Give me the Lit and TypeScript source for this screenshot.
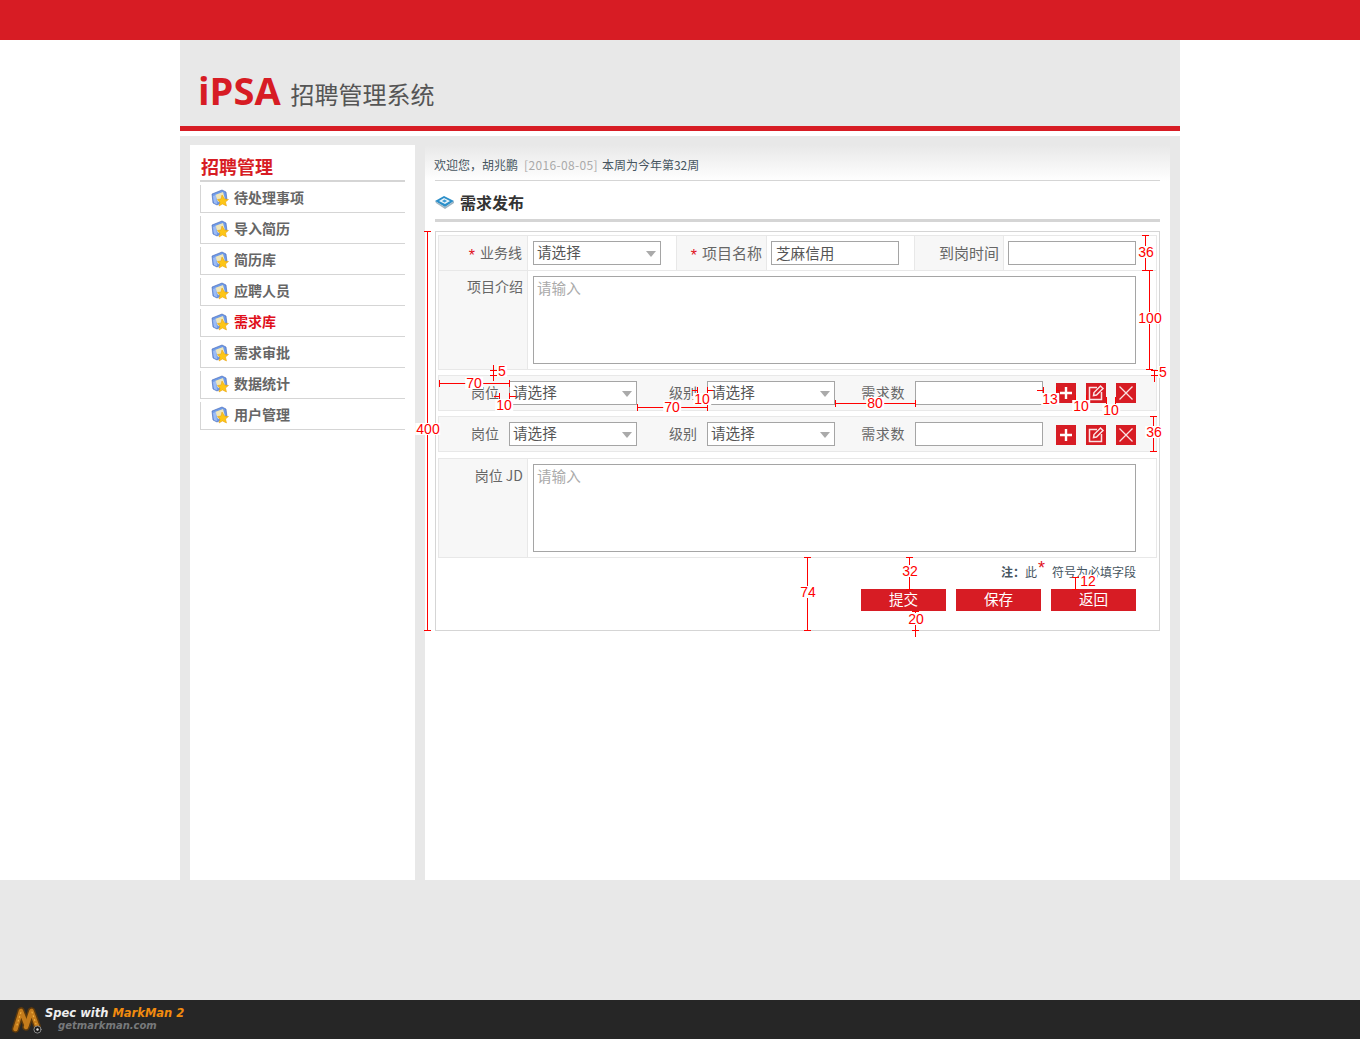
import { LitElement, html, css, svg } from 'lit';
import { customElement } from 'lit/decorators.js';

const MENU = ['待处理事项', '导入简历', '简历库', '应聘人员', '需求库', '需求审批', '数据统计', '用户管理'];
const ACTIVE_MENU = '需求库';

// markman spec lines: [x1, y1, x2, y2]
const SPEC_LINES: number[][] = [
  [427, 231, 427, 631],
  [1145, 235, 1145, 270],
  [1149, 270, 1149, 369],
  [439, 383, 509, 383],
  [637, 407, 707, 407],
  [835, 403, 915, 403],
  [1153, 416, 1153, 452],
  [807, 557, 807, 631],
  [909, 557, 909, 589],
  [915, 611, 915, 637],
  [1075, 577, 1075, 589],
  [493, 365, 493, 381],
  [1154, 370, 1154, 382],
  [494, 396, 499, 396],
  [509, 396, 516, 396],
  [692, 390, 697, 390],
  [707, 390, 713, 390],
  [1037, 390, 1043, 390],
  [1056, 390, 1060, 390],
];

// caps are short ticks across a line end: [x, y, vertical]
const SPEC_CAPS: number[][] = [
  [427, 231, 0], [427, 630, 0], [1145, 235, 0], [1145, 270, 0], [1149, 270, 0], [1149, 369, 0],
  [1153, 416, 0], [1153, 451, 0], [807, 557, 0], [807, 630, 0], [909, 557, 0], [915, 630, 0],
  [493, 370, 0], [493, 375, 0], [1154, 370, 0], [1154, 375, 0], [915, 611, 0], [1075, 589, 0],
  [1075, 577, 0], [909, 589, 0],
  [439, 383, 1], [509, 383, 1], [637, 407, 1], [707, 407, 1], [835, 403, 1], [915, 403, 1],
  [499, 396, 1], [509, 396, 1], [697, 390, 1], [707, 390, 1], [1043, 390, 1], [1056, 390, 1],
  [1075, 398, 1], [1086, 398, 1], [1106, 400, 1], [1115, 400, 1],
];

const SPEC_LABELS: [string, number, number][] = [
  ['400', 428, 429], ['36', 1146, 252], ['100', 1150, 318], ['5', 1163, 372], ['5', 502, 371],
  ['70', 474, 383], ['10', 504, 405], ['70', 672, 407], ['10', 702, 399], ['80', 875, 403],
  ['13', 1050, 399], ['10', 1081, 406], ['10', 1111, 410], ['36', 1154, 432], ['74', 808, 592],
  ['32', 910, 571], ['20', 916, 619], ['12', 1088, 581],
];

const folderIcon = svg`<svg width="18" height="18" viewBox="0 0 18 18">
  <path d="M1 5 L11 1 L15 3 L16 11 L6 16 L2 14 Z" fill="#6f9be8" stroke="#3f63b4" stroke-width=".6"/>
  <path d="M4 6 L12 3 L14 10 L7 13 Z" fill="#efe6b8"/>
  <path d="M2 7 L5 6 L6 15 L3 14 Z" fill="#9dbcf5"/>
  <path d="M11 6 L13.5 10 L17.5 10.5 L14.5 13 L15.5 17 L11.5 15 L8 17 L9 13 L6.5 10.5 L10 10 Z" fill="#fdc617" stroke="#e59a06" stroke-width=".5"/>
</svg>`;

const titleIcon = svg`<svg width="20" height="15" viewBox="0 0 20 15">
  <path d="M0 6 L9 1 L19 6 L10 12 Z" fill="#2c8fc9"/>
  <path d="M4 6 L9 3 L15 6 L10 9 Z" fill="#e8f3fa"/>
  <path d="M7 6 L9.5 4.5 L12 6 L9.5 7.5 Z" fill="#3b9bd3"/>
  <path d="M0 6 L10 12 L19 6 L19 8 L10 14 L1 8 Z" fill="#9fb4c2"/>
</svg>`;

const plusIcon = svg`<svg width="20" height="20" viewBox="0 0 20 20"><path d="M10 4 V16 M4 10 H16" stroke="#fff" stroke-width="2.4" fill="none"/></svg>`;
const editIcon = svg`<svg width="20" height="20" viewBox="0 0 20 20" fill="none" stroke="#fff" stroke-width="1.5" opacity=".88">
  <path d="M11 4.5 H3.5 V16.5 H15.5 V9"/>
  <path d="M7.5 12.5 L8 9.5 L14.5 3 L17 5.5 L10.5 12 Z"/>
</svg>`;
const closeIcon = svg`<svg width="20" height="20" viewBox="0 0 20 20"><path d="M3.5 3.5 L16.5 16.5 M16.5 3.5 L3.5 16.5" stroke="#fff" stroke-width="1.3" fill="none" opacity=".88"/></svg>`;

const markmanLogo = svg`<svg width="32" height="28" viewBox="0 0 32 28" fill="none" stroke-linecap="round">
  <path d="M4.5 23 L10 5 M10 5 L15.5 19" stroke="#5e3a0c" stroke-width="7.5"/>
  <path d="M15 21 L20.5 5 M20.5 5 L26 20" stroke="#5e3a0c" stroke-width="7.5"/>
  <path d="M4.5 23 L10 5 L15.5 19" stroke="#c57c1c" stroke-width="4.5" stroke-linejoin="round"/>
  <path d="M15 21 L20.5 5 L26 20" stroke="#c57c1c" stroke-width="4.5" stroke-linejoin="round"/>
  <path d="M6 19 L10 6 M21 6 L25 18" stroke="#f0b040" stroke-width="1.2" stroke-dasharray="1 3"/>
  <circle cx="26.5" cy="23.5" r="3.6" fill="#1b1b1b" stroke="#8a8a8a" stroke-width="1"/>
  <circle cx="26.5" cy="23.5" r="1.2" fill="#ddd"/>
</svg>`;

@customElement('app-root')
export class AppRoot extends LitElement {
  static styles = css`
    :host {
      display: block;
      position: relative;
      font-family: "Noto Sans CJK SC", "Liberation Sans", sans-serif;
      font-size: 14px;
      color: #666;
      background: #fff;
    }
    * { box-sizing: border-box; }

    .top-bar { height: 40px; background: #d71c24; }
    .page { width: 1000px; margin: 0 auto; height: 840px; background: #e8e8e8; display: flex; flex-direction: column; }
    .header { height: 91px; border-bottom: 5px solid #d71c24; display: flex; align-items: flex-end; padding: 0 0 14px 18px; gap: 10px; }
    .logo { font-family: "Open Sans", sans-serif; font-weight: 700; font-size: 38px; line-height: 44px; color: #d71c24; height: 44px; }
    .logo-title { font-size: 24px; line-height: 32px; margin-bottom: 2px; color: #555; font-weight: 400; }
    .white-strip { height: 5px; background: #fff; }
    .columns { flex: 1; display: flex; gap: 10px; padding: 9px 10px 0; min-height: 0; }

    .sidebar { width: 225px; background: #fff; padding: 0 10px; }
    .side-title { margin: 0; height: 37px; border-bottom: 2px solid #d5d5d5; font-size: 18px; line-height: 42px; font-weight: 700; color: #d71c24; padding-left: 1px; overflow: hidden; }
    .menu { list-style: none; margin: 3px 0 0; padding: 0; }
    .menu li { height: 28px; margin-bottom: 3px; border-left: 1px solid #d5d5d5; border-bottom: 1px solid #d5d5d5; display: flex; align-items: center; gap: 5px; padding-left: 10px; font-size: 14px; font-weight: 700; color: #666; }
    .menu li span { padding-bottom: 4px; }
    .menu li.active { color: #e0101c; }
    .menu svg { flex: none; margin-bottom: 2px; }

    .main { width: 745px; background: linear-gradient(#e8e8e8, #fff 36px); padding: 0 10px; }
    .welcome { height: 36px; border-bottom: 1px solid #d5d5d5; font-size: 12px; line-height: 40px; color: #46555f; text-indent: -1px; }
    .welcome .date { color: #aaa; margin: 0 4px 0 6px; letter-spacing: .35px; }
    .page-title { height: 41px; border-bottom: 3px solid #d5d5d5; display: flex; align-items: center; gap: 5px; margin: 0; padding-top: 3px; font-size: 16px; font-weight: 700; color: #333; }
    .page-title svg { margin-top: 2px; }

    .form { margin-top: 9px; height: 400px; border: 1px solid #d5d5d5; padding: 3px 2px 0; width: 725px; }
    .table { width: 719px; display: grid; grid-template-columns: 89px 149px 90px 148px 89px 152px; grid-template-rows: 35px 98px; border: 1px solid #e8e8e8; }
    .label { background: #f7f7f7; border-right: 1px solid #e8e8e8; border-bottom: 1px solid #e8e8e8; display: flex; align-items: center; justify-content: flex-end; padding: 0 4px 2px 0; }
    .label.first { padding-right: 5px; }
    .label.big { font-size: 15px; }
    .label.tall { align-items: flex-start; padding-top: 5px; }
    .jd .label.tall { padding-top: 6px; }
    .value { border-right: 1px solid #e8e8e8; border-bottom: 1px solid #e8e8e8; padding: 5px 0 0 5px; }
    .value.mid { padding-left: 4px; }
    .value.end { border-right: 0; padding-left: 4px; }
    .value.wide { grid-column: 2 / 7; border-right: 0; border-bottom: 0; }
    .label.tall.last { border-bottom: 0; }
    .req { color: #e0101c; font-family: "Liberation Sans", sans-serif; font-size: 16px; line-height: 16px; margin: 7px 5px 0 0; }

    .field { width: 128px; height: 24px; border: 1px solid #a5a5a5; background: #fff; font: inherit; font-size: 14.6px; color: #555; padding: 0 4px 2px; margin: 0; display: block; outline: none; }
    .select { position: relative; line-height: 20px; padding: 0 3px; }
    .select::after { content: ""; position: absolute; right: 4px; top: 9px; border: 5px solid transparent; border-top: 6px solid #aaa; border-bottom: 0; }
    .area { width: 603px; height: 88px; border: 1px solid #a5a5a5; font: inherit; font-size: 14.6px; padding: 0 3px; margin: 0; display: block; resize: none; outline: none; }
    .area::placeholder { color: #aaa; }

    .row { width: 719px; height: 36px; margin-top: 5px; background: #f7f7f7; border: 1px solid #e8e8e8; display: flex; align-items: center; }
    .row-label { width: 60px; flex: none; text-align: right; margin-right: 10px; padding-bottom: 2px; }
    .row-label.num { width: 70px; letter-spacing: .6px; }
    .actions { display: flex; gap: 10px; margin-left: 13px; }
    .row + .row .actions { margin-top: 2px; }
    .icon-btn { width: 20px; height: 20px; padding: 0; border: 0; background: #d71c24; display: block; }
    .icon-btn svg { display: block; }

    .jd { grid-template-rows: 98px; margin-top: 6px; }
    .form-foot { width: 698px; display: flex; flex-direction: column; align-items: flex-end; }
    .note { height: 31px; padding-bottom: 4px; display: flex; align-items: center; font-size: 12px; color: #46555f; white-space: nowrap; }
    .note b { font-weight: 700; }
    .note .star { color: #e0101c; font-family: "Liberation Sans", sans-serif; font-size: 18px; line-height: 12px; margin: -8px 7px 0 1px; }
    .buttons { display: flex; gap: 10px; }
    .btn { width: 85px; height: 22px; border: 0; padding: 0 0 2px; background: #d71c24; color: #fff; font: inherit; font-size: 14.6px; line-height: 20px; }

    .below { height: 120px; background: #e8e8e8; }
    .brand { height: 39px; background: #262626; display: flex; align-items: center; padding-left: 11px; gap: 2px; font-family: "DejaVu Sans", sans-serif; font-style: italic; font-weight: 700; }
    .brand svg { flex: none; }
    .brand-text { font-size: 11.5px; line-height: 13px; color: #eee; white-space: nowrap; margin-top: -1px; }
    .brand-text em { color: #f28c0f; font-style: inherit; }
    .brand-sub { font-size: 10px; color: #77797b; padding-left: 13px; }

    .spec { position: absolute; inset: 0; pointer-events: none; overflow: hidden; }
    .spec i { position: absolute; background: #f00; display: block; }
    .spec span { position: absolute; transform: translate(-50%, -50%); background: #fff; color: #f00; font: 14px/12px "Liberation Sans", sans-serif; padding: 0 1px; }
  `;

  private renderSelect() {
    return html`<div class="field select">请选择</div>`;
  }

  private renderDemandRow() {
    return html`
      <div class="row">
        <span class="row-label">岗位</span>${this.renderSelect()}
        <span class="row-label">级别</span>${this.renderSelect()}
        <span class="row-label num">需求数</span><input class="field" />
        <div class="actions">
          <button class="icon-btn">${plusIcon}</button>
          <button class="icon-btn">${editIcon}</button>
          <button class="icon-btn">${closeIcon}</button>
        </div>
      </div>
    `;
  }

  private renderSpec() {
    return html`
      <div class="spec">
        ${SPEC_LINES.map(([x1, y1, x2, y2]) => html`
          <i style="left:${x1}px;top:${y1}px;width:${Math.max(x2 - x1, 1)}px;height:${Math.max(y2 - y1, 1)}px"></i>
        `)}
        ${SPEC_CAPS.map(([x, y, vertical]) => vertical
          ? html`<i style="left:${x}px;top:${y - 3}px;width:1px;height:7px"></i>`
          : html`<i style="left:${x - 3}px;top:${y}px;width:7px;height:1px"></i>`)}
        ${SPEC_LABELS.map(([text, x, y]) => html`<span style="left:${x}px;top:${y}px">${text}</span>`)}
      </div>
    `;
  }

  render() {
    return html`
      <div class="top-bar"></div>
      <div class="page">
        <header class="header">
          <div class="logo">iPSA</div>
          <div class="logo-title">招聘管理系统</div>
        </header>
        <div class="white-strip"></div>
        <div class="columns">
          <aside class="sidebar">
            <h2 class="side-title">招聘管理</h2>
            <ul class="menu">
              ${MENU.map(item => html`
                <li class=${item === ACTIVE_MENU ? 'active' : ''}>${folderIcon}<span>${item}</span></li>
              `)}
            </ul>
          </aside>
          <main class="main">
            <div class="welcome">欢迎您，胡兆鹏<span class="date">[2016-08-05]</span>本周为今年第32周</div>
            <h1 class="page-title">${titleIcon}<span>需求发布</span></h1>
            <section class="form">
              <div class="table">
                <div class="label first"><span class="req">*</span>业务线</div>
                <div class="value">${this.renderSelect()}</div>
                <div class="label big"><span class="req">*</span>项目名称</div>
                <div class="value mid"><input class="field" value="芝麻信用" /></div>
                <div class="label big">到岗时间</div>
                <div class="value end"><input class="field" /></div>
                <div class="label tall last">项目介绍</div>
                <div class="value wide"><textarea class="area" placeholder="请输入"></textarea></div>
              </div>
              ${this.renderDemandRow()}
              ${this.renderDemandRow()}
              <div class="table jd">
                <div class="label tall last">岗位 JD</div>
                <div class="value wide"><textarea class="area" placeholder="请输入"></textarea></div>
              </div>
              <div class="form-foot">
                <div class="note"><b>注：</b>此<span class="star">*</span>符号为必填字段</div>
                <div class="buttons">
                  <button class="btn">提交</button>
                  <button class="btn">保存</button>
                  <button class="btn">返回</button>
                </div>
              </div>
            </section>
          </main>
        </div>
      </div>
      <div class="below"></div>
      <footer class="brand">
        ${markmanLogo}
        <div>
          <div class="brand-text">Spec with <em>MarkMan 2</em></div>
          <div class="brand-text brand-sub">getmarkman.com</div>
        </div>
      </footer>
      ${this.renderSpec()}
    `;
  }
}
